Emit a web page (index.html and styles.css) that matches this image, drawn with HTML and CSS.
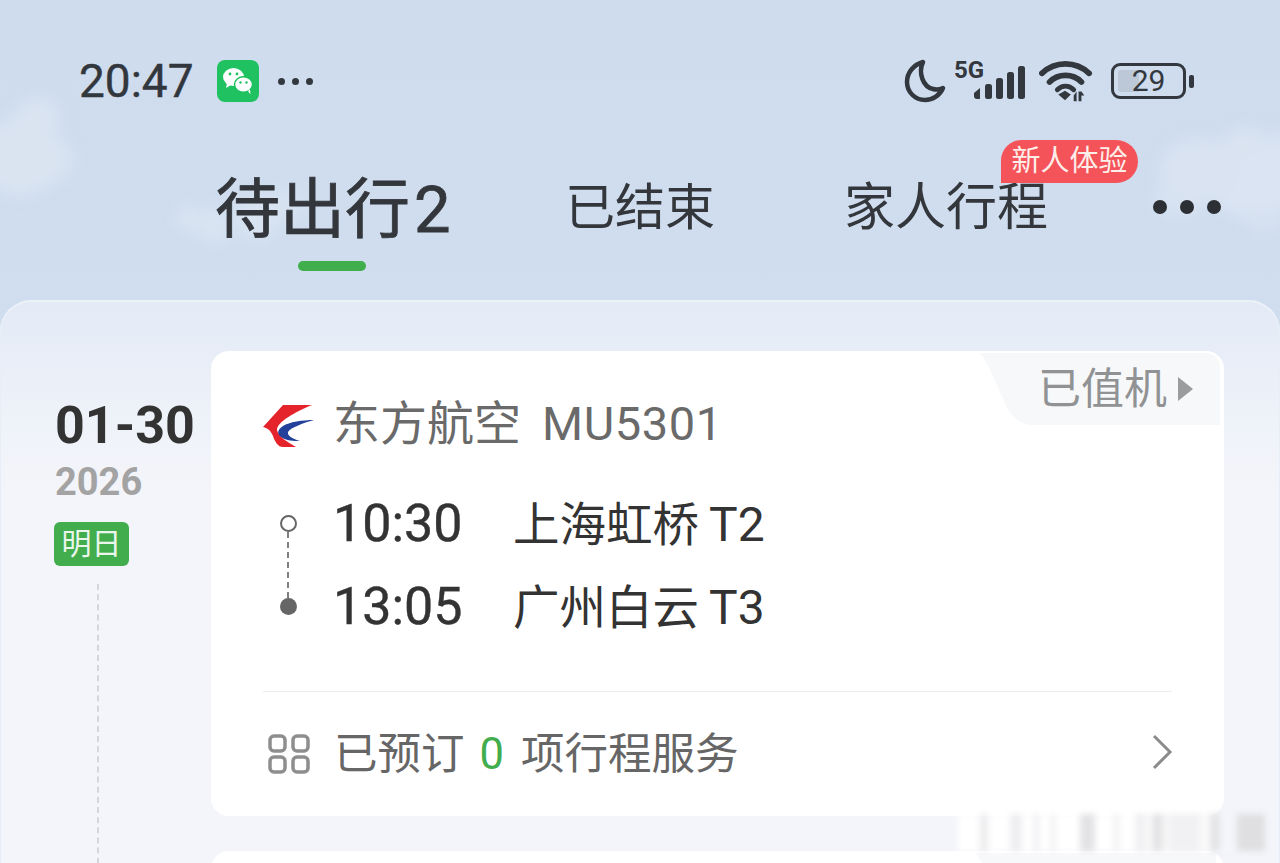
FILE: index.html
```html
<!DOCTYPE html>
<html lang="zh-CN">
<head>
<meta charset="UTF-8">
<meta name="viewport" content="width=device-width, initial-scale=1.0">
<title>待出行</title>
<link rel="stylesheet" href="styles.css">
</head>
<body>
<div class="page">
  <div class="cloud cloud-left"></div>
  <div class="cloud cloud-mid"></div>
  <div class="cloud cloud-right"></div>
  <div class="cloud cloud-low"></div>

  <div class="statusbar">
    <div class="status-left">
      <span class="clock">20:47</span>
      <svg class="wechat" width="42" height="42" viewBox="0 0 42 42">
        <rect width="42" height="42" rx="8" fill="#1fc160"/>
        <ellipse cx="16.500" cy="17" rx="10.500" ry="9" fill="#fff"/>
        <path d="M10 23l-1 5 5-3z" fill="#fff"/>
        <ellipse cx="26.500" cy="24.500" rx="9" ry="7.800" fill="#fff" stroke="#1fc160" stroke-width="1.500"/>
        <path d="M31 31l2.500 3.500-.5-5z" fill="#fff"/>
        <circle cx="13" cy="14" r="1.400" fill="#1fc160"/>
        <circle cx="20" cy="14" r="1.400" fill="#1fc160"/>
        <circle cx="23.500" cy="22.500" r="1.200" fill="#1fc160"/>
        <circle cx="29.500" cy="22.500" r="1.200" fill="#1fc160"/>
      </svg>
      <span class="status-dots"><i></i><i></i><i></i></span>
    </div>
    <div class="status-right">
      <svg class="moon" width="44" height="44" viewBox="0 0 44 44">
        <path d="M20 3C10 6 4 14 4 23c0 10 8 18 18 18 8 0 15-5 18-12-3 1.500-7 2-10 1C20 28 15 14 20 3z" fill="none" stroke="#33383e" stroke-width="4.500" stroke-linejoin="round"/>
      </svg>
      <div class="signal">
        <span class="five-g">5G</span>
        <svg width="54" height="34" viewBox="0 0 54 34">
          <path d="M1 27l6-5v11H4a3 3 0 0 1-3-3z" fill="#33383e"/>
          <rect x="12" y="18" width="7" height="15" rx="2.500" fill="#33383e"/>
          <rect x="23" y="12" width="7" height="21" rx="2.500" fill="#33383e"/>
          <rect x="34" y="6" width="7" height="27" rx="2.500" fill="#33383e"/>
          <rect x="45" y="0" width="7" height="33" rx="2.500" fill="#33383e"/>
        </svg>
      </div>
      <svg class="wifi" width="54" height="44" viewBox="0 0 56 44">
        <path d="M3 14C17 1 38 1 52 14" fill="none" stroke="#33383e" stroke-width="6" stroke-linecap="round"/>
        <path d="M11 23C20 14 35 14 44 23" fill="none" stroke="#33383e" stroke-width="6" stroke-linecap="round"/>
        <path d="M19 31c5-5 12-5 17 0" fill="none" stroke="#33383e" stroke-width="5" stroke-linecap="round"/>
        <path d="M20 36l7-4 6 4-6 6z" fill="#33383e"/>
        <path d="M36 37l3-4v10h-3zM41 33h3l3 4h-3v6h-3z" fill="#33383e"/>
      </svg>
      <div class="battery">
        <div class="battery-body">
          <div class="battery-level"></div>
          <span class="battery-num">29</span>
        </div>
        <div class="battery-cap"></div>
      </div>
    </div>
  </div>

  <div class="tabs">
    <div class="tab tab-active">待出行<span class="tab-count">2</span><div class="tab-bar"></div></div>
    <div class="tab tab-done">已结束</div>
    <div class="tab tab-family">家人行程<span class="tab-badge">新人体验</span></div>
    <div class="more"><i></i><i></i><i></i></div>
  </div>

  <div class="panel">
    <div class="date-col">
      <div class="date">01-30</div>
      <div class="year">2026</div>
      <div class="day-tag">明日</div>
      <div class="date-line"></div>
    </div>
    <div class="cards">
      <div class="card">
        <div class="checkin">
          <svg class="checkin-bg" width="240" height="72" viewBox="0 0 240 72">
            <path d="M0 0H226a14 14 0 0 1 14 14V72H54C38 72 30 62 24 48 16 30 8 10 0 0z" fill="#f7f8fa"/>
          </svg>
          <span class="checkin-text">已值机</span>
          <span class="checkin-arrow"></span>
        </div>
        <div class="airline">
          <svg class="logo" width="52" height="44" viewBox="0 0 52 44">
            <path d="M49 1H20L0 23c5 1 8 4 10 9 2 6 5 11 10 11h13c-9-5-18-11-19-17 0-8 18-18 35-25z" fill="#e5232a"/>
            <path d="M51 16c-11 0-25 2-31 6-6 4-6 8-2 11 5 4 13 4 19 4-7-2-13-5-12-9 2-4 15-9 26-12z" fill="#23409b"/>
          </svg>
          <span class="airline-name">东方航空</span>
          <span class="flight-no">MU5301</span>
        </div>
        <div class="legs">
          <div class="leg">
            <span class="stop stop-open"></span>
            <span class="leg-time">10:30</span>
            <span class="leg-place">上海虹桥</span>
            <span class="leg-term">T2</span>
          </div>
          <div class="leg">
            <span class="stop stop-fill"></span>
            <span class="leg-time">13:05</span>
            <span class="leg-place">广州白云</span>
            <span class="leg-term">T3</span>
          </div>
        </div>
        <div class="services">
          <svg class="grid-icon" width="42" height="40" viewBox="0 0 42 40">
            <g fill="none" stroke="#8e8e8e" stroke-width="3.500">
              <rect x="2" y="2" width="15" height="15" rx="4"/>
              <rect x="25" y="2" width="15" height="15" rx="4"/>
              <rect x="2" y="23" width="15" height="15" rx="4"/>
              <rect x="25" y="23" width="15" height="15" rx="4"/>
            </g>
          </svg>
          <span class="services-text">已预订<b class="services-num">0</b>项行程服务</span>
          <svg class="chevron" width="22" height="36" viewBox="0 0 22 36">
            <path d="M3 2l16 16L3 34" fill="none" stroke="#8c8c8c" stroke-width="3"/>
          </svg>
        </div>
      </div>
      <div class="card card-next"><div class="next-tag"></div></div>
    </div>
  </div>

  <div class="watermark"></div>
</div>
</body>
</html>
```

FILE: styles.css
```css
* {
  box-sizing: border-box;
}
body {
  margin: 0;
  font-family: Roboto, "Noto Sans CJK SC", sans-serif;
}
.page {
  position: relative;
  width: 1280px;
  height: 863px;
  overflow: hidden;
  background: linear-gradient(#cfdcee, #cfddef 250px, #d3dfef);
  color: #33373c;
}
.cloud {
  position: absolute;
  border-radius: 50%;
  background: #dae4f1;
  filter: blur(8px);
}
.cloud-left {
  left: 16px;
  top: 98px;
  width: 44px;
  height: 38px;
  box-shadow: -18px 40px 0 20px #dae4f1, 8px 42px 0 6px #d8e3f0;
}
.cloud-mid {
  left: 176px;
  top: 206px;
  width: 24px;
  height: 24px;
  box-shadow: 26px 8px 0 5px #d9e4f1, 70px 0 0 10px #d9e4f1, 100px -14px 0 6px #d6e2f0;
}
.cloud-right {
  left: 1225px;
  top: 128px;
  width: 40px;
  height: 26px;
  box-shadow: -46px 30px 0 20px #d9e3f1, 10px 40px 0 26px #dae4f2, -66px 58px 0 6px #d6e2f0, 40px 10px 0 6px #d9e3f1;
}
.cloud-low {
  left: 1245px;
  top: 218px;
  width: 40px;
  height: 12px;
  background: #d9e3f1;
}

/* status bar */
.statusbar {
  position: relative;
  height: 160px;
  padding: 51px 86px 0 79px;
  display: flex;
  justify-content: space-between;
  align-items: flex-start;
}
.status-left {
  display: flex;
  align-items: center;
  height: 60px;
}
.clock {
  font-size: 46px;
  line-height: 60px;
  color: #32373d;
  width: 138px;
  -webkit-text-stroke: .4px #32373d;
}
.status-dots {
  display: flex;
  gap: 7px;
  margin-left: 19px;
}
.status-dots i {
  width: 7px;
  height: 7px;
  border-radius: 50%;
  background: #33383e;
}
.status-right {
  display: flex;
  align-items: center;
  height: 60px;
}
.moon {
  margin-right: 6px;
}
.signal {
  position: relative;
  width: 73px;
  height: 44px;
  margin-right: 13px;
  display: flex;
  align-items: flex-end;
  justify-content: flex-end;
}
.signal svg {
  margin-right: -1px;
  margin-bottom: 3px;
}
.five-g {
  position: absolute;
  left: 1px;
  top: -2px;
  font-size: 24px;
  font-weight: 700;
  line-height: 26px;
  color: #33383e;
}
.wifi {
  margin-right: 18px;
}
.battery {
  display: flex;
  align-items: center;
  gap: 3px;
}
.battery-body {
  position: relative;
  width: 75px;
  height: 36px;
  border: 3px solid #33383e;
  border-radius: 9px;
  padding: 4px;
}
.battery-level {
  width: 21px;
  height: 100%;
  background: #bcc8d8;
  border-radius: 3px 0 0 3px;
}
.battery-num {
  position: absolute;
  left: 0;
  right: 0;
  top: 0;
  text-align: center;
  font-size: 30px;
  line-height: 30px;
  color: #33383e;
}
.battery-cap {
  width: 5px;
  height: 13px;
  background: #33383e;
  border-radius: 2px;
}

/* tabs */
.tabs {
  position: relative;
  height: 140px;
  padding-left: 215px;
  display: flex;
  align-items: flex-start;
}
.tab {
  position: relative;
  font-size: 50px;
  line-height: 72px;
  margin-top: 12px;
  color: #33373c;
  white-space: nowrap;
}
.tab-active {
  font-size: 65px;
  line-height: 94px;
  margin-top: 3px;
  width: 235px;
  margin-right: 115px;
  -webkit-text-stroke: .8px #33373c;
}
.tab-count {
  margin-left: 4px;
}
.tab-bar {
  position: absolute;
  left: 83px;
  top: 98px;
  width: 68px;
  height: 10px;
  border-radius: 5px;
  background: #3fae4b;
}
.tab-done {
  width: 150px;
  margin-right: 129px;
}
.tab-family {
  font-size: 51px;
  width: 204px;
  margin-right: 105px;
}
.tab-badge {
  position: absolute;
  left: 157px;
  top: -32px;
  width: 137px;
  height: 43px;
  border-radius: 21px 22px 22px 0;
  background: #f5535a;
  color: #fdeeea;
  font-size: 29px;
  line-height: 43px;
  text-align: center;
}
.more {
  display: flex;
  gap: 13px;
  margin-top: 40px;
}
.more i {
  width: 14px;
  height: 14px;
  border-radius: 50%;
  background: #2c2f33;
}

/* panel */
.panel {
  position: absolute;
  left: 0;
  top: 300px;
  width: 1280px;
  height: 620px;
  border-radius: 32px 32px 0 0;
  background: linear-gradient(#e3eaf6, #eef2f9 120px, #f4f5fa 190px);
  box-shadow: inset 0 2px 0 #edf2f9, inset 1px 0 0 #e8eef7, inset -1px 0 0 #e8eef7;
  padding: 51px 56px 0 0;
  display: flex;
}
.date-col {
  position: relative;
  width: 211px;
  padding: 47px 0 0 55px;
}
.date {
  font-size: 52px;
  font-weight: 700;
  line-height: 56px;
  color: #333;
  white-space: nowrap;
}
.year {
  font-size: 38px;
  font-weight: 700;
  line-height: 44px;
  margin-top: 6px;
  color: #a3a3a3;
}
.day-tag {
  width: 75px;
  height: 44px;
  margin: 18px 0 0 -1px;
  border-radius: 6px;
  background: #41ad4d;
  color: #eaf6eb;
  font-size: 30px;
  line-height: 44px;
  text-align: center;
}
.date-line {
  position: absolute;
  left: 97px;
  top: 233px;
  height: 300px;
  border-left: 2px dashed #d5d6da;
}
.cards {
  width: 1013px;
}
.card {
  position: relative;
  height: 465px;
  border-radius: 18px;
  background: #fff;
  padding: 40px 52px 0;
}
.card-next {
  height: 60px;
  margin-top: 35px;
  padding: 0;
}
.next-tag {
  position: absolute;
  top: 2px;
  right: 8px;
  width: 240px;
  height: 20px;
  background: #f7f8fa;
  clip-path: polygon(0 0, 100% 0, 100% 100%, 5% 100%);
}
.checkin {
  position: absolute;
  top: 2px;
  right: 4px;
  width: 240px;
  height: 72px;
  display: flex;
  align-items: center;
  padding-left: 58px;
}
.checkin-bg {
  position: absolute;
  left: 0;
  top: 0;
}
.checkin-text {
  position: relative;
  font-size: 43px;
  line-height: 72px;
  color: #909294;
}
.checkin-arrow {
  position: relative;
  margin-left: 11px;
  border-left: 15px solid #9a9c9e;
  border-top: 12px solid transparent;
  border-bottom: 12px solid transparent;
}
.airline {
  display: flex;
  align-items: center;
  height: 66px;
}
.logo {
  margin: 4px 18px 0 0;
}
.airline-name {
  font-size: 47px;
  line-height: 66px;
  color: #6a6a6a;
}
.flight-no {
  font-size: 47px;
  line-height: 66px;
  color: #6a6a6a;
  margin-left: 21px;
  letter-spacing: .6px;
}
.legs {
  position: relative;
  margin-top: 25px;
}
.legs::before {
  content: "";
  position: absolute;
  left: 24px;
  top: 50px;
  width: 2px;
  height: 66px;
  background: repeating-linear-gradient(#808080 0 6px, transparent 6px 10px);
}
.leg {
  position: relative;
  display: flex;
  align-items: baseline;
  height: 83px;
  line-height: 83px;
  white-space: nowrap;
}
.stop {
  position: absolute;
  left: 17px;
  top: 33px;
  width: 17px;
  height: 17px;
  border-radius: 50%;
}
.stop-open {
  border: 2px solid #666;
  background: #fff;
}
.stop-fill {
  background: #666;
}
.leg-time {
  width: 180px;
  margin-left: 70px;
  font-size: 52px;
  color: #333;
  -webkit-text-stroke: .4px #333;
}
.leg-place {
  font-size: 46.500px;
  color: #333;
}
.leg-term {
  margin-left: 10px;
  font-size: 48px;
  color: #333;
}
.services {
  display: flex;
  align-items: center;
  height: 125px;
  margin-top: 43px;
  border-top: 1px solid #ececec;
  padding-left: 5px;
}
.grid-icon {
  margin-right: 24px;
}
.services-text {
  flex: 1;
  margin-top: -7px;
  font-size: 43.500px;
  color: #666;
}
.services-num {
  font-weight: 400;
  color: #41ad4d;
  margin: 0 17px 0 15px;
}
.chevron {
  margin: -5px -1px 0 0;
}

/* blurred mark along the bottom edge */
.watermark {
  position: absolute;
  left: 958px;
  top: 814px;
  width: 307px;
  height: 37px;
  background: linear-gradient(90deg, #fff 0 22px, #ececee 22px 30px, #fff 30px 52px, #eeeef0 52px 64px, #fff 64px 75px, #f3f3f5 75px 82px, #fff 82px 92px, #f3f3f5 92px 98px, #fff 98px 122px, #e3e3e5 122px 137px, #fff 137px 155px, #f4f4f6 155px 162px, #fff 162px 177px, #f0f0f2 177px 187px, #f8f8f9 187px 195px, #e2e2e4 195px 204px, #f6f6f7 204px 212px, #f1f1f3 212px 242px, #fafafb 242px 252px, #e4e4e6 252px 262px, #f4f5fa 262px 279px, #dfdfe1 279px 307px);
  filter: blur(3px);
}
```
